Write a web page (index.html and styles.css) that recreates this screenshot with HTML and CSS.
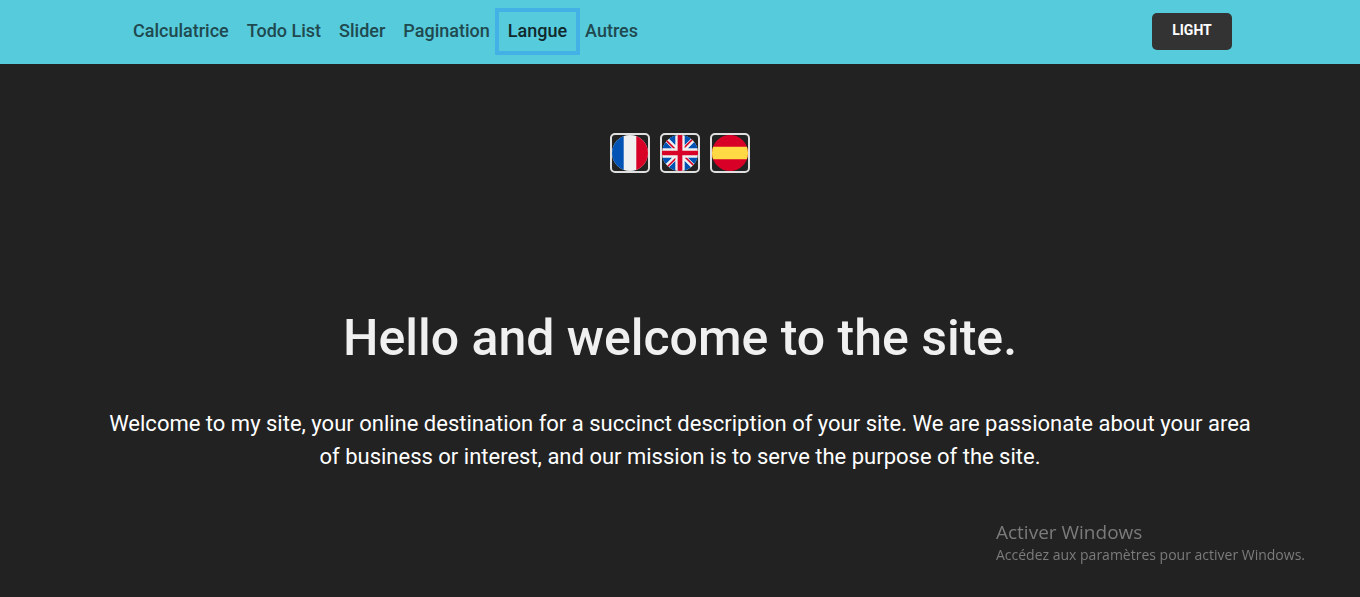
FILE: index.html
```html
<!DOCTYPE html>
<html lang="en">
<head>
<meta charset="utf-8">
<meta name="viewport" content="width=device-width, initial-scale=1">
<title>Langue</title>
<link rel="stylesheet" href="styles.css">
</head>
<body>
<header class="navbar">
  <div class="navbar-inner">
    <nav class="nav" aria-label="Main">
      <a class="nav-link" href="#calculatrice">Calculatrice</a>
      <a class="nav-link" href="#todo">Todo List</a>
      <a class="nav-link" href="#slider">Slider</a>
      <a class="nav-link" href="#pagination">Pagination</a>
      <a class="nav-link active" href="#langue" aria-current="page">Langue</a>
      <a class="nav-link" href="#autres">Autres</a>
    </nav>
    <button class="theme-button" type="button">LIGHT</button>
  </div>
</header>
<main class="content">
  <div class="languages">
    <button class="flag" type="button" aria-label="Français">
      <svg viewBox="0 0 36 36"><clipPath id="disc"><circle cx="18" cy="18" r="18"/></clipPath><g clip-path="url(#disc)"><path fill="#f0f0f0" d="M0 0h36v36H0z"/><path fill="#0052b4" d="M0 0h11.7v36H0z"/><path fill="#d80027" d="M24.3 0H36v36H24.3z"/></g></svg>
    </button>
    <button class="flag" type="button" aria-label="English">
      <svg viewBox="0 0 512 512"><circle cx="256" cy="256" r="256" fill="#f0f0f0"/><path fill="#0052b4" d="M52.920 100.142c-20.109 26.163-35.272 56.318-44.101 89.077h133.178zM503.181 189.219c-8.829-32.758-23.993-62.913-44.101-89.076l-89.075 89.076zM8.819 322.784c8.830 32.758 23.993 62.913 44.101 89.075l89.074-89.075zM411.858 52.921c-26.163-20.109-56.317-35.272-89.076-44.102v133.177zM100.142 459.079c26.163 20.109 56.318 35.272 89.076 44.102V370.005zM189.217 8.819c-32.758 8.830-62.913 23.993-89.075 44.101l89.075 89.075zM322.783 503.181c32.758-8.830 62.913-23.993 89.075-44.101l-89.075-89.075zM370.005 322.784l89.075 89.076c20.108-26.162 35.272-56.318 44.101-89.076z"/><path fill="#d80027" d="M509.833 222.609H289.392V2.167C278.461.744 267.317 0 256 0s-22.461.744-33.391 2.167v220.441H2.167C.744 233.539 0 244.683 0 256s.744 22.461 2.167 33.391h220.441v220.442C233.539 511.256 244.681 512 256 512s22.461-.743 33.391-2.167V289.392h220.442C511.256 278.461 512 267.317 512 256s-.744-22.461-2.167-33.391z"/><path fill="#d80027" d="M322.783 322.784 437.019 437.020a256.636 256.636 0 0 0 15.048-16.435l-97.802-97.802h-31.482zM189.217 322.784h-.002L74.980 437.019a256.636 256.636 0 0 0 16.435 15.048l97.802-97.804zM189.217 189.219v-.002L74.981 74.980a256.636 256.636 0 0 0-15.048 16.435l97.803 97.803h31.481zM322.783 189.219 437.020 74.981a256.328 256.328 0 0 0-16.435-15.047l-97.802 97.803z"/></svg>
    </button>
    <button class="flag" type="button" aria-label="Español">
      <svg viewBox="0 0 36 36"><g clip-path="url(#disc)"><path fill="#d80027" d="M0 0h36v36H0z"/><path fill="#ffda44" d="M0 11.7h36v12.600H0z"/></g></svg>
    </button>
  </div>
  <section class="welcome">
    <h1 class="title">Hello and welcome to the site.</h1>
    <p class="description">Welcome to my site, your online destination for a succinct description of your site. We are passionate about your area of business or interest, and our mission is to serve the purpose of the site.</p>
  </section>
</main>
<aside class="activation">
  <p class="activation-title">Activer Windows</p>
  <p class="activation-text">Accédez aux paramètres pour activer Windows.</p>
</aside>
</body>
</html>
```
FILE: styles.css
```css
* { box-sizing: border-box; }
body {
  margin: 0;
  min-height: 100vh;
  background: #222;
  color: #fff;
  font-family: Roboto, sans-serif;
}
.navbar { background: #56cbdc; }
.navbar-inner {
  display: flex;
  align-items: center;
  justify-content: space-between;
  width: 84%;
  max-width: 1112px;
  min-height: 64px;
  margin: 0 auto;
  padding: 0 4px 2px 0;
}
.nav { display: flex; }
.nav-link {
  padding: 7px 9px 9px;
  color: #1f494f;
  font-size: 18px;
  font-weight: 500;
  line-height: 23px;
  text-decoration: none;
}
.nav-link.active {
  color: #11292c;
  outline: 4px solid #43b1e6;
}
.theme-button {
  width: 80px;
  height: 37px;
  padding: 0 0 2px;
  border: 0;
  border-radius: 5px;
  background: #333;
  color: #fff;
  font: 700 14px/20px Roboto, sans-serif;
}
.content { padding: 69px 24px 0; }
.languages {
  display: flex;
  justify-content: center;
  gap: 10px;
}
.flag {
  width: 40px;
  height: 40px;
  padding: 0;
  border: 2px solid #dfdfdf;
  border-radius: 5px;
  background: transparent;
}
.flag svg { display: block; width: 36px; height: 36px; }
.welcome {
  max-width: 1160px;
  margin: 135px auto 0;
  text-align: center;
}
.title {
  margin: 0;
  color: #f0f0f0;
  font-size: 50px;
  font-weight: 500;
  line-height: 60px;
}
.description {
  margin: 39px 0 0;
  font-size: 22px;
  line-height: 33px;
}
.activation {
  position: fixed;
  right: 55px;
  bottom: 32px;
  color: #7b7b7b;
  font-family: "Open Sans", sans-serif;
}
.activation p { margin: 0; }
.activation-title { font-size: 19px; line-height: 25px; }
.activation-text { font-size: 14px; line-height: 20px; }
```
